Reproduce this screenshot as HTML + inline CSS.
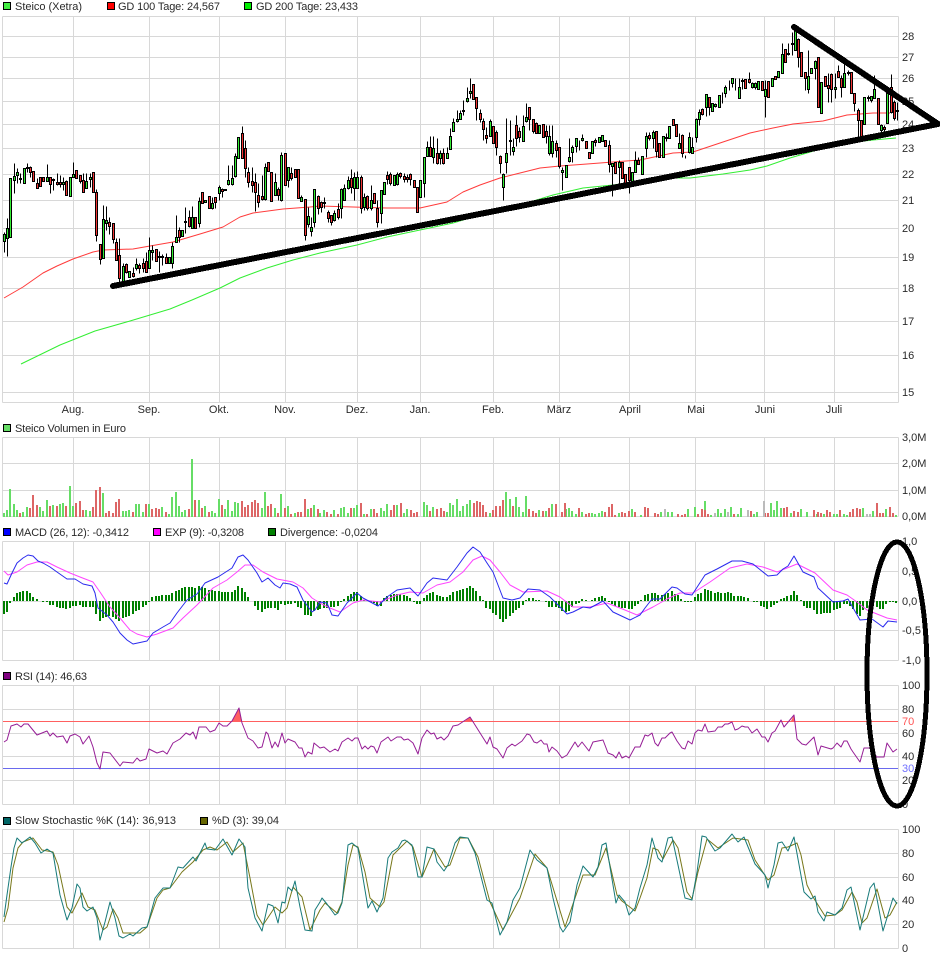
<!DOCTYPE html>
<html><head><meta charset="utf-8"><title>Steico</title>
<style>html,body{margin:0;padding:0;background:#fff}svg{display:block}text{font-family:"Liberation Sans",sans-serif;font-size:11px;fill:#2a2a2a}</style></head>
<body>
<svg width="940" height="958" viewBox="0 0 940 958" xmlns="http://www.w3.org/2000/svg">
<g transform="translate(.5 .5)" fill="none" stroke="#d8d8d8" shape-rendering="crispEdges">
<path d="M2 16H898M2 36H898M2 57H898M2 78H898M2 101H898M2 124H898M2 148H898M2 174H898M2 200H898M2 228H898M2 257H898M2 288H898M2 321H898M2 355H898M2 392H898M2 402H898M2 16V402M73 16V402M149 16V402M219 16V402M285 16V402M357 16V402M420 16V402M493 16V402M559 16V402M629 16V402M695 16V402M764 16V402M834 16V402M898 16V402"/>
<path d="M2 437H898M2 463H898M2 490H898M2 516H898M2 437V516M73 437V516M149 437V516M219 437V516M285 437V516M357 437V516M420 437V516M493 437V516M559 437V516M629 437V516M695 437V516M764 437V516M834 437V516M898 437V516"/>
<path d="M2 541H898M2 571H898M2 601H898M2 630H898M2 660H898M2 541V660M73 541V660M149 541V660M219 541V660M285 541V660M357 541V660M420 541V660M493 541V660M559 541V660M629 541V660M695 541V660M764 541V660M834 541V660M898 541V660"/>
<path d="M2 685H898M2 709H898M2 733H898M2 756H898M2 780H898M2 804H898M2 685V804M73 685V804M149 685V804M219 685V804M285 685V804M357 685V804M420 685V804M493 685V804M559 685V804M629 685V804M695 685V804M764 685V804M834 685V804M898 685V804"/>
<path d="M2 829H898M2 853H898M2 877H898M2 900H898M2 924H898M2 948H898M2 829V948M73 829V948M149 829V948M219 829V948M285 829V948M357 829V948M420 829V948M493 829V948M559 829V948M629 829V948M695 829V948M764 829V948M834 829V948M898 829V948"/>
</g>

<g fill="none" stroke-width="1" stroke-linejoin="round">
<polyline stroke="#ff3b3b" points="4,298 23,287 43,273 57,266 73,259 93,252 103,250 133,249 150,246 173,242 200,234 223,227 240,217 253,213 283,209 310,207 320,206 353,207 387,208 420,208 447,202 463,192 480,185 500,178 520,173 540,168 560,166 587,164 613,162 640,160 673,153 693,152 717,144 750,133 773,128 793,124 823,121 847,115 873,113 890,113"/>
<polyline stroke="#33ee33" points="21,364 60,345 95,331 130,321 170,309 192,300 220,288 240,278 267,268 293,260 320,253 357,245 387,237 420,230 453,223 490,212 530,202 553,195 583,188 613,185 640,181 667,178 690,178 723,174 750,170 767,166 790,158 817,150 847,143 873,140 896,138"/>
</g>

<g transform="translate(.5 .5)" shape-rendering="crispEdges">
<path fill="none" stroke="#000" d="M4 232V252M7 218V256M10 178V237M14 163V193M17 168V183M20 173V183M24 168V183M27 163V172M30 166V177M33 171V181M37 178V188M40 177V186M43 177V181M47 164V181M50 177V193M53 178V190M57 173V185M60 175V187M63 177V190M66 180V195M70 177V196M73 162V177M76 170V178M80 175V183M83 173V192M86 173V188M90 173V187M93 172V192M96 189V241M100 244V264M103 205V258M106 206V230M109 217V234M113 223V243M116 238V260M119 238V283M123 263V282M126 263V273M129 271V277M133 267V277M136 258V270M139 263V273M143 258V272M146 252V272M149 237V268M152 245V260M156 249V261M159 251V272M162 254V265M166 253V263M169 257V263M172 242V268M176 215V242M179 227V242M182 230V236M185 207V233M189 210V227M192 206V228M195 217V228M199 197V227M202 192V203M205 200V202M209 196V208M212 197V209M215 197V208M219 185V200M222 188V197M225 189V190M228 165V185M232 165V185M235 153V177M238 137V158M242 126V158M245 140V177M248 167V187M252 167V192M255 173V211M258 183V207M262 175V200M265 163V200M268 162V171M271 172V201M275 173V195M278 187V200M281 152V201M285 153V185M288 167V187M291 167V180M295 169V177M298 169V198M301 195V201M305 199V240M308 207V227M311 217V236M314 189V227M318 195V214M321 201V212M324 197V208M328 210V222M331 215V225M334 210V221M338 203V219M341 188V218M344 184V200M348 176V189M351 169V193M354 172V200M357 171V188M361 175V213M364 193V210M367 195V210M371 185V210M374 193V203M377 200V227M381 190V223M384 182V194M387 171V184M390 172V185M394 175V185M397 172V185M400 172V178M404 173V182M407 174V182M410 173V185M414 180V187M417 187V212M420 180V197M424 157V197M427 141V156M430 136V156M433 136V163M437 138V164M440 150V164M443 148V164M447 147V158M450 128V149M453 118V131M457 110V122M460 110V119M463 100V115M467 87V102M470 78V98M473 84V99M476 97V120M480 109V122M483 118V140M486 127V143M490 119V136M493 126V143M496 130V155M500 155V173M503 173V200M506 118V173M510 120V155M513 138V155M516 115V146M519 127V142M523 115V141M526 103V122M529 107V130M533 119V133M536 122V133M539 125V133M543 124V137M546 125V143M549 125V155M552 125V157M556 140V157M559 147V168M562 167V190M566 165V177M569 138V162M572 145V162M576 138V152M579 140V150M582 134V141M586 141V148M589 152V158M592 141V153M595 138V146M599 137V142M602 135V141M605 140V146M609 140V172M612 163V196M615 162V173M619 160V185M622 162V178M625 174V183M629 167V193M632 172V183M635 151V172M638 157V164M642 156V174M646 132V157M649 132V140M653 130V148M656 131V157M659 143V157M663 136V157M666 133V141M669 126V138M673 119V125M676 124V136M679 133V148M682 134V157M685 155V158M689 132V153M692 137V153M696 118V142M699 109V125M702 108V115M706 94V116M709 97V115M712 103V111M715 103V107M719 95V107M722 92V103M725 85V97M729 80V90M732 78V87M735 78V90M739 78V98M742 78V89M745 79V88M749 72V83M752 82V88M755 82V89M758 81V89M762 81V90M765 80V117M768 81V97M772 78V86M775 76V79M778 71V77M782 43V73M785 49V62M788 43V55M792 32V55M795 26V50M798 38V67M801 52V76M805 72V90M808 50V93M811 68V73M815 60V79M818 57V107M821 82V113M825 76V86M828 73V102M831 73V102M835 73V98M838 65V77M841 75V97M844 63V87M848 70V75M851 72V93M854 93V111M858 108V136M861 120V137M864 97V124M868 95V101M871 96V102M874 75V98M878 98V124M881 124V135M884 125V133M887 93V123M891 74V113M894 100V120M897 102V120"/>
<path fill="#33ee33" stroke="#000" d="M3 234h2v7h-2zM6 228h2v10h-2zM9 178h2v59h-2zM13 176h2v4h-2zM16 172h2v3h-2zM19 178h2v1h-2zM23 168h2v15h-2zM26 167h2v1h-2zM46 177h2v4h-2zM52 179h2v1h-2zM62 182h2v2h-2zM69 177h2v19h-2zM72 174h2v3h-2zM85 181h2v7h-2zM89 177h2v2h-2zM102 219h2v39h-2zM105 220h2v3h-2zM122 266h2v16h-2zM128 271h2v6h-2zM135 264h2v4h-2zM148 250h2v18h-2zM151 250h2v2h-2zM158 256h2v1h-2zM168 257h2v6h-2zM171 246h2v17h-2zM175 237h2v5h-2zM181 230h2v6h-2zM184 221h2v1h-2zM191 217h2v11h-2zM198 201h2v22h-2zM204 200h2v2h-2zM211 203h2v5h-2zM218 187h2v6h-2zM224 189h2v1h-2zM227 180h2v4h-2zM231 178h2v6h-2zM234 156h2v20h-2zM237 137h2v21h-2zM264 167h2v32h-2zM274 182h2v13h-2zM280 155h2v45h-2zM287 167h2v13h-2zM300 197h2v4h-2zM307 216h2v8h-2zM310 227h2v4h-2zM313 189h2v33h-2zM323 202h2v1h-2zM333 213h2v7h-2zM340 189h2v19h-2zM343 188h2v12h-2zM347 180h2v8h-2zM353 177h2v11h-2zM356 177h2v11h-2zM363 197h2v10h-2zM370 200h2v8h-2zM380 190h2v23h-2zM383 182h2v12h-2zM393 175h2v10h-2zM396 174h2v10h-2zM419 180h2v17h-2zM423 157h2v26h-2zM426 147h2v9h-2zM432 148h2v9h-2zM439 153h2v5h-2zM446 153h2v5h-2zM449 136h2v13h-2zM452 122h2v9h-2zM456 119h2v2h-2zM459 113h2v6h-2zM462 110h2v1h-2zM466 98h2v3h-2zM469 91h2v2h-2zM489 121h2v15h-2zM502 174h2v13h-2zM505 153h2v9h-2zM509 140h2v1h-2zM512 147h2v4h-2zM522 126h2v15h-2zM525 117h2v4h-2zM538 125h2v8h-2zM548 136h2v17h-2zM551 141h2v12h-2zM561 170h2v2h-2zM565 165h2v12h-2zM568 157h2v4h-2zM571 147h2v5h-2zM575 138h2v8h-2zM581 138h2v2h-2zM591 141h2v12h-2zM598 137h2v5h-2zM601 135h2v6h-2zM611 163h2v3h-2zM618 162h2v5h-2zM631 172h2v11h-2zM634 160h2v12h-2zM641 156h2v18h-2zM645 136h2v12h-2zM652 132h2v6h-2zM662 136h2v21h-2zM665 137h2v1h-2zM668 126h2v12h-2zM678 143h2v5h-2zM688 137h2v15h-2zM691 147h2v6h-2zM695 119h2v18h-2zM698 112h2v7h-2zM705 94h2v13h-2zM711 103h2v8h-2zM714 104h2v2h-2zM718 95h2v12h-2zM724 87h2v6h-2zM731 78h2v5h-2zM738 87h2v11h-2zM741 80h2v1h-2zM751 83h2v4h-2zM754 83h2v4h-2zM757 81h2v8h-2zM764 89h2v7h-2zM771 78h2v8h-2zM777 71h2v6h-2zM781 54h2v19h-2zM794 30h2v20h-2zM807 76h2v13h-2zM810 68h2v5h-2zM814 61h2v7h-2zM820 82h2v31h-2zM834 87h2v2h-2zM843 73h2v14h-2zM863 97h2v27h-2zM870 96h2v4h-2zM873 89h2v9h-2zM880 125h2v5h-2zM886 93h2v30h-2z"/>
<path fill="#f03434" stroke="#000" d="M29 167h2v5h-2zM32 171h2v10h-2zM36 183h2v5h-2zM39 177h2v9h-2zM42 177h2v4h-2zM49 177h2v7h-2zM56 182h2v2h-2zM59 182h2v2h-2zM65 181h2v14h-2zM75 170h2v8h-2zM79 175h2v6h-2zM82 180h2v12h-2zM92 172h2v20h-2zM95 192h2v43h-2zM99 244h2v15h-2zM108 222h2v4h-2zM112 223h2v16h-2zM115 242h2v18h-2zM118 255h2v23h-2zM125 264h2v8h-2zM132 273h2v3h-2zM138 265h2v3h-2zM142 263h2v5h-2zM145 261h2v11h-2zM155 249h2v12h-2zM161 256h2v1h-2zM165 257h2v6h-2zM178 230h2v7h-2zM188 217h2v9h-2zM194 217h2v11h-2zM201 192h2v11h-2zM208 196h2v12h-2zM214 197h2v5h-2zM221 189h2v2h-2zM241 133h2v25h-2zM244 148h2v20h-2zM247 172h2v10h-2zM251 181h2v4h-2zM254 182h2v10h-2zM257 195h2v7h-2zM261 196h2v3h-2zM267 162h2v9h-2zM270 172h2v29h-2zM277 189h2v6h-2zM284 153h2v32h-2zM290 173h2v5h-2zM294 169h2v8h-2zM297 169h2v29h-2zM304 199h2v36h-2zM317 196h2v12h-2zM320 202h2v5h-2zM327 212h2v6h-2zM330 215h2v7h-2zM337 209h2v8h-2zM350 178h2v9h-2zM360 177h2v31h-2zM366 196h2v12h-2zM373 193h2v10h-2zM376 208h2v14h-2zM386 175h2v4h-2zM389 174h2v9h-2zM399 173h2v3h-2zM403 176h2v3h-2zM406 177h2v2h-2zM409 174h2v5h-2zM413 180h2v7h-2zM416 187h2v25h-2zM429 147h2v9h-2zM436 153h2v10h-2zM442 153h2v10h-2zM472 84h2v15h-2zM475 97h2v11h-2zM479 113h2v6h-2zM482 121h2v8h-2zM485 135h2v3h-2zM492 126h2v17h-2zM495 132h2v15h-2zM499 156h2v7h-2zM515 125h2v13h-2zM518 131h2v6h-2zM528 107h2v12h-2zM532 119h2v12h-2zM535 123h2v10h-2zM542 124h2v13h-2zM545 131h2v5h-2zM555 143h2v7h-2zM558 147h2v19h-2zM585 141h2v7h-2zM588 152h2v6h-2zM594 140h2v2h-2zM604 140h2v6h-2zM608 145h2v19h-2zM614 162h2v11h-2zM621 162h2v16h-2zM624 174h2v9h-2zM628 167h2v13h-2zM637 160h2v4h-2zM648 135h2v3h-2zM655 131h2v20h-2zM658 143h2v14h-2zM672 119h2v6h-2zM675 124h2v12h-2zM681 135h2v18h-2zM701 109h2v5h-2zM708 97h2v10h-2zM744 79h2v9h-2zM748 79h2v3h-2zM761 81h2v9h-2zM767 81h2v16h-2zM774 76h2v3h-2zM784 49h2v13h-2zM787 53h2v1h-2zM791 43h2v1h-2zM797 39h2v18h-2zM800 52h2v24h-2zM804 72h2v6h-2zM817 57h2v50h-2zM824 76h2v10h-2zM827 85h2v3h-2zM830 74h2v15h-2zM837 71h2v6h-2zM840 78h2v9h-2zM847 72h2v1h-2zM850 72h2v21h-2zM853 93h2v10h-2zM857 110h2v10h-2zM860 120h2v17h-2zM867 97h2v1h-2zM877 98h2v26h-2zM883 127h2v2h-2zM890 87h2v25h-2zM893 102h2v16h-2zM896 110h2v1h-2z"/>
</g>

<g fill="none" stroke-width="2" shape-rendering="crispEdges">
<path stroke="#66dd66" d="M4 517v-4M7 517v-7M10 517v-28M14 517v-13M17 517v-7M23 517v-5M27 517v-10M40 517v-10M43 517v-6M47 517v-17M53 517v-12M60 517v-13M63 517v-14M70 517v-31M73 517v-11M86 517v-7M90 517v-6M103 517v-24M123 517v-6M126 517v-6M129 517v-7M136 517v-13M139 517v-13M143 517v-5M149 517v-13M162 517v-10M169 517v-3M172 517v-20M176 517v-25M179 517v-11M182 517v-5M185 517v-7M192 517v-58M199 517v-17M205 517v-11M212 517v-6M215 517v-4M219 517v-18M225 517v-8M228 517v-17M232 517v-6M235 517v-15M238 517v-14M262 517v-9M265 517v-25M275 517v-9M281 517v-23M288 517v-11M295 517v-4M308 517v-8M314 517v-12M320 517v-4M324 517v-7M334 517v-7M341 517v-9M344 517v-10M348 517v-4M354 517v-9M357 517v-12M364 517v-3M371 517v-8M381 517v-9M384 517v-6M387 517v-13M397 517v-12M404 517v-4M407 517v-8M424 517v-15M427 517v-12M433 517v-10M447 517v-5M450 517v-14M453 517v-12M457 517v-18M460 517v-6M463 517v-11M467 517v-13M470 517v-17M490 517v-4M506 517v-25M510 517v-18M516 517v-20M519 517v-10M523 517v-5M526 517v-21M539 517v-7M546 517v-6M552 517v-13M566 517v-8M569 517v-9M572 517v-6M576 517v-3M582 517v-5M592 517v-4M595 517v-3M599 517v-4M602 517v-6M619 517v-4M632 517v-8M641 517v-2M661 517v-5M668 517v-5M672 517v-5M688 517v-8M695 517v-10M705 517v-16M711 517v-2M718 517v-8M721 517v-4M725 517v-8M731 517v-10M738 517v-3M741 517v-9M754 517v-3M757 517v-5M771 517v-14M774 517v-7M777 517v-16M781 517v-9M791 517v-4M801 517v-8M807 517v-5M817 517v-3M824 517v-3M834 517v-3M837 517v-3M844 517v-3M847 517v-2M863 517v-9M873 517v-6M886 517v-8M896 517v-2"/>
<path stroke="#dd6666" d="M20 517v-4M30 517v-9M33 517v-22M37 517v-12M50 517v-11M57 517v-11M66 517v-11M76 517v-14M80 517v-16M83 517v-7M93 517v-10M96 517v-27M100 517v-30M106 517v-4M109 517v-6M113 517v-4M116 517v-15M119 517v-18M133 517v-5M146 517v-13M152 517v-8M156 517v-9M159 517v-8M166 517v-5M189 517v-8M195 517v-17M202 517v-9M209 517v-5M222 517v-12M242 517v-16M245 517v-10M248 517v-12M252 517v-15M255 517v-17M258 517v-14M268 517v-11M271 517v-13M278 517v-4M285 517v-9M291 517v-3M298 517v-5M301 517v-5M305 517v-18M311 517v-9M318 517v-8M327 517v-5M331 517v-3M338 517v-3M351 517v-9M361 517v-14M367 517v-3M374 517v-8M377 517v-4M391 517v-7M394 517v-12M401 517v-14M411 517v-7M414 517v-4M417 517v-5M430 517v-6M437 517v-8M441 517v-9M444 517v-6M474 517v-14M477 517v-16M480 517v-15M483 517v-12M486 517v-5M493 517v-7M496 517v-11M500 517v-11M503 517v-17M513 517v-11M529 517v-8M533 517v-6M536 517v-4M543 517v-6M549 517v-9M556 517v-13M562 517v-5M565 517v-14M579 517v-9M586 517v-3M589 517v-4M605 517v-5M609 517v-10M612 517v-13M615 517v-2M622 517v-5M625 517v-4M629 517v-6M635 517v-5M645 517v-10M648 517v-9M655 517v-4M658 517v-3M678 517v-3M682 517v-2M685 517v-3M698 517v-3M702 517v-8M705 517v-7M708 517v-3M734 517v-3M748 517v-2M751 517v-6M765 517v-4M768 517v-4M784 517v-9M787 517v-10M794 517v-6M798 517v-5M814 517v-7M818 517v-5M821 517v-4M827 517v-7M830 517v-5M840 517v-7M850 517v-5M853 517v-8M857 517v-9M860 517v-8M877 517v-14M880 517v-4M883 517v-4M890 517v-10M893 517v-4"/>
<path stroke="#bbbbbb" d="M665 517v-8M715 517v-4M728 517v-5M748 517v-7M764 517v-16M867 517v-3M870 517v-3"/>
<path stroke="#008000" d="M4 601v13M7 601v11M10 601v2M14 601v-4M17 601v-8M20 601v-9M23 601v-10M27 601v-10M30 601v-8M33 601v-4M37 601v-2M43 601v1M47 601v1M50 601v4M53 601v4M57 601v6M60 601v7M63 601v7M66 601v8M70 601v7M73 601v5M76 601v5M80 601v4M83 601v6M86 601v6M90 601v6M93 601v6M96 601v13M100 601v20M103 601v17M106 601v16M109 601v15M113 601v16M116 601v18M119 601v20M123 601v17M126 601v16M129 601v15M133 601v13M136 601v10M139 601v9M143 601v6M146 601v4M149 601v1M152 601v-4M156 601v-5M159 601v-5M162 601v-6M166 601v-6M169 601v-6M172 601v-8M176 601v-10M179 601v-11M182 601v-13M185 601v-14M189 601v-14M192 601v-14M195 601v-13M199 601v-15M202 601v-14M205 601v-13M209 601v-11M212 601v-11M215 601v-10M219 601v-10M222 601v-9M225 601v-9M228 601v-9M232 601v-9M235 601v-11M238 601v-15M242 601v-13M245 601v-9M248 601v-4M255 601v5M258 601v9M262 601v11M265 601v8M268 601v7M271 601v7M275 601v7M278 601v9M281 601v3M285 601v4M288 601v3M291 601v3M295 601v2M298 601v6M301 601v7M305 601v14M308 601v14M311 601v15M314 601v10M318 601v9M320 601v8M324 601v7M327 601v7M331 601v6M334 601v6M338 601v5M341 601v1M344 601v-2M348 601v-5M351 601v-7M354 601v-9M357 601v-9M361 601v-5M364 601v-1M371 601v1M374 601v2M377 601v5M381 601v5M384 601v-3M387 601v-5M391 601v-6M394 601v-7M397 601v-7M400 601v-7M404 601v-6M407 601v-5M410 601v-3M414 601v1M417 601v3M420 601v3M424 601v-3M427 601v-6M430 601v-8M433 601v-9M437 601v-6M440 601v-5M443 601v-4M447 601v-4M450 601v-6M453 601v-9M457 601v-10M460 601v-11M463 601v-12M467 601v-13M470 601v-15M473 601v-13M476 601v-10M480 601v-5M483 601v-1M486 601v7M490 601v8M493 601v12M496 601v14M500 601v18M503 601v21M506 601v18M510 601v15M513 601v12M516 601v9M519 601v7M523 601v4M526 601v-1M529 601v-3M533 601v-3M536 601v-1M539 601v-1M546 601v1M549 601v6M552 601v6M556 601v6M559 601v7M562 601v10M566 601v11M569 601v10M572 601v6M576 601v3M579 601v2M582 601v-2M586 601v-1M592 601v-1M595 601v-3M599 601v-4M602 601v-5M605 601v-3M609 601v1M612 601v3M615 601v5M619 601v6M622 601v7M625 601v7M629 601v8M632 601v8M635 601v5M638 601v3M641 601v-1M645 601v-6M648 601v-7M652 601v-8M655 601v-8M658 601v-6M662 601v-6M665 601v-7M668 601v-8M672 601v-10M675 601v-7M678 601v-6M681 601v-2M685 601v1M688 601v1M691 601v1M695 601v-4M698 601v-7M701 601v-8M705 601v-12M708 601v-11M711 601v-10M715 601v-8M718 601v-9M721 601v-8M725 601v-8M728 601v-9M731 601v-8M734 601v-5M738 601v-5M741 601v-5M744 601v-4M748 601v-3M754 601v1M757 601v1M761 601v5M764 601v6M767 601v8M771 601v6M774 601v4M777 601v2M781 601v-2M784 601v-3M787 601v-5M791 601v-6M794 601v-10M797 601v-6M801 601v-1M804 601v5M807 601v7M810 601v7M814 601v9M817 601v13M821 601v13M824 601v12M827 601v12M830 601v12M834 601v9M837 601v8M840 601v7M844 601v3M847 601v3M850 601v5M853 601v8M857 601v13M860 601v15M863 601v9M867 601v7M870 601v7M873 601v3M877 601v6M880 601v8M883 601v8M886 601v3M890 601v1M893 601v1M896 601v2"/>
</g>

<g fill="none" stroke-width="1" stroke-linejoin="round">
<polyline stroke="#ff44ff" points="4,571 8,575 17,572 27,565 37,562 47,562 57,567 70,573 80,577 93,582 100,592 110,607 120,618 130,630 137,634 147,637 157,634 173,628 183,618 197,605 213,588 227,580 237,572 245,565 253,565 263,572 277,579 293,582 303,588 312,598 320,603 330,608 340,612 353,603 363,600 380,602 397,595 410,592 423,593 437,585 450,582 463,572 473,560 482,556 490,560 500,572 510,585 523,592 547,591 560,597 573,607 590,607 607,603 620,608 637,615 653,607 667,599 680,593 693,593 710,582 730,568 747,564 763,567 777,572 797,564 815,573 833,590 847,595 857,602 867,610 887,618 897,620"/>
<polyline stroke="#2a2aee" points="4,583 7,584 12,573 17,563 23,558 28,555 33,556 38,561 43,563 50,567 57,572 67,579 75,579 83,584 92,586 95,593 98,608 107,615 113,622 120,633 127,640 133,644 147,641 153,633 163,627 170,623 177,613 187,600 197,594 205,583 218,577 232,568 238,557 243,555 248,560 257,573 262,582 268,578 275,585 280,588 283,583 290,584 297,587 303,600 312,612 315,610 320,602 327,603 332,615 338,616 347,603 357,593 363,598 378,606 387,597 397,590 410,588 418,596 427,583 433,578 447,580 457,567 467,553 473,547 480,552 487,563 493,572 503,598 512,600 520,598 528,589 540,590 550,597 560,607 567,614 573,612 583,607 590,608 603,601 613,612 630,620 640,615 645,608 652,599 660,599 672,587 677,588 685,594 692,595 705,575 717,569 732,561 742,561 753,564 768,576 777,575 783,569 788,566 794,556 803,572 814,577 818,588 833,602 843,601 848,599 860,620 872,619 883,627 888,621 897,622"/>
<path stroke="#ff6060" d="M3 721.5H898"/>
<path stroke="#6a6aee" d="M3 768.5H898"/>
<path fill="#ff6060" stroke="none" d="M232 721L239 708L242 721ZM465 721L470 717L473 721ZM791 721L794 715L795 721Z"/>
<polyline stroke="#961e96" points="4,742 7,740 11,726 17,724 21,727 24,724 28,724 37,735 47,731 50,736 53,733 57,737 63,736 67,743 70,736 75,734 80,737 83,744 89,736 93,747 97,763 100,769 103,752 110,753 120,766 123,762 133,763 137,758 140,761 146,759 149,749 157,753 163,751 167,754 173,743 180,739 186,733 190,735 193,732 196,739 199,727 206,727 210,732 215,730 219,723 223,726 227,726 232,721 239,708 242,723 248,738 253,741 258,748 262,747 266,732 268,734 272,748 275,742 278,747 282,733 285,743 288,739 295,742 299,748 302,748 305,757 308,752 312,754 314,743 320,748 324,747 330,752 335,749 338,751 342,742 348,738 352,741 355,738 358,738 362,749 365,746 368,749 371,746 374,747 377,753 381,742 388,737 391,741 397,737 401,737 404,740 408,739 413,743 418,754 422,738 427,730 431,734 434,733 437,739 441,737 444,740 448,736 453,726 458,725 470,717 487,744 490,737 493,747 497,749 503,758 507,748 512,744 515,746 522,741 527,734 530,735 534,742 537,743 541,740 544,744 547,744 549,752 552,747 557,751 562,758 567,755 575,742 578,747 582,742 589,751 593,742 603,740 608,753 613,755 616,758 619,752 622,758 626,756 629,758 635,747 640,747 645,735 648,736 652,733 655,743 658,746 662,738 665,738 670,733 672,732 677,741 682,748 685,749 688,741 692,744 695,733 698,730 702,731 705,724 708,732 715,731 718,727 722,727 725,724 728,724 732,722 735,730 738,729 742,726 745,727 748,727 752,733 757,729 762,737 765,737 768,742 772,733 775,731 781,720 784,727 794,715 797,739 802,744 806,745 814,737 818,755 821,746 831,749 833,748 837,743 841,747 844,741 847,741 851,749 853,752 860,762 864,748 870,748 877,757 884,757 887,743 893,752 897,749"/>
<polyline stroke="#77771a" points="4,922 8,908 13,868 18,848 23,842 33,838 42,850 53,852 58,865 67,907 72,913 82,893 88,907 95,910 103,930 107,927 113,909 118,918 123,933 140,933 147,927 157,898 163,890 170,888 182,872 193,862 203,850 210,847 217,850 227,842 233,852 243,843 250,878 257,915 263,925 275,907 282,913 287,908 293,887 302,897 310,930 320,910 325,903 337,913 342,902 348,865 353,845 358,847 365,872 370,898 380,907 384,902 393,855 407,841 413,847 422,877 434,849 445,867 450,865 460,838 468,838 478,857 490,902 503,930 520,898 535,854 547,868 565,927 583,875 595,875 606,848 617,895 622,901 635,911 640,898 647,878 653,848 658,850 663,859 673,840 678,848 687,892 692,899 698,872 707,839 718,848 733,838 748,840 755,860 768,880 774,875 782,848 788,847 797,843 801,855 807,885 813,897 825,916 835,915 842,910 852,892 857,902 862,923 867,918 877,889 885,918 890,915 897,902"/>
<polyline stroke="#177a7a" points="4,917 7,895 11,867 14,848 17,838 22,843 30,837 35,843 41,853 47,849 53,853 60,895 67,920 72,908 77,884 80,888 83,907 87,911 93,907 97,918 100,940 105,922 110,902 115,918 119,936 123,938 130,934 133,936 142,928 147,927 155,898 163,888 170,888 178,867 183,868 193,857 196,861 200,853 205,843 207,849 215,850 223,839 232,855 239,839 245,847 248,888 255,918 262,931 268,904 273,906 278,923 282,902 285,903 288,887 292,891 295,881 300,907 305,930 312,931 315,910 320,902 322,898 327,904 335,915 338,913 342,903 348,845 352,843 358,848 368,908 372,901 377,912 383,898 388,858 392,852 398,848 402,841 405,840 412,845 418,877 422,877 427,847 434,849 437,862 444,871 448,865 455,843 460,837 468,838 475,853 487,900 492,903 500,935 507,922 513,900 520,888 530,850 537,860 547,868 553,898 560,927 563,932 570,922 577,885 583,866 593,877 598,867 602,845 606,843 616,903 619,895 625,902 629,915 635,908 640,888 647,865 652,838 658,858 662,862 668,838 672,837 678,865 685,898 692,900 697,872 702,836 706,837 715,851 720,848 732,834 738,842 744,837 755,864 765,875 768,888 774,865 778,843 782,842 788,851 794,837 804,892 811,899 815,896 818,912 824,921 827,912 835,915 842,908 847,890 851,887 860,930 870,888 874,883 883,931 893,898 897,904"/>
</g>

<g stroke="#000" shape-rendering="crispEdges">
<rect x="3.5" y="2.5" width="7" height="7" fill="#44ee44"/>
<rect x="107.5" y="2.5" width="7" height="7" fill="#ff0000"/>
<rect x="244.5" y="2.5" width="7" height="7" fill="#00ee00"/>
<rect x="3.5" y="424.5" width="7" height="7" fill="#66dd66"/>
<rect x="3.5" y="528.5" width="7" height="7" fill="#0000ff"/>
<rect x="153.5" y="528.5" width="7" height="7" fill="#ff00ff"/>
<rect x="268.5" y="528.5" width="7" height="7" fill="#008000"/>
<rect x="3.5" y="672.5" width="7" height="7" fill="#800080"/>
<rect x="3.5" y="817.5" width="7" height="7" fill="#006666"/>
<rect x="200.5" y="817.5" width="7" height="7" fill="#666600"/>
</g>
<text x="15" y="10" textLength="67" lengthAdjust="spacing">Steico (Xetra)</text>
<text x="118" y="10" textLength="102" lengthAdjust="spacing">GD 100 Tage: 24,567</text>
<text x="256" y="10" textLength="102" lengthAdjust="spacing">GD 200 Tage: 23,433</text>
<text x="15" y="432" textLength="111" lengthAdjust="spacing">Steico Volumen in Euro</text>
<text x="15" y="536" textLength="114" lengthAdjust="spacing">MACD (26, 12): -0,3412</text>
<text x="165" y="536" textLength="79" lengthAdjust="spacing">EXP (9): -0,3208</text>
<text x="280" y="536" textLength="98" lengthAdjust="spacing">Divergence: -0,0204</text>
<text x="15" y="680" textLength="72" lengthAdjust="spacing">RSI (14): 46,63</text>
<text x="15" y="824" textLength="161" lengthAdjust="spacing">Slow Stochastic %K (14): 36,913</text>
<text x="212" y="824" textLength="67" lengthAdjust="spacing">%D (3): 39,04</text>

<g text-anchor="middle">
<text x="73" y="413">Aug.</text><text x="149" y="413">Sep.</text><text x="219" y="413">Okt.</text><text x="285" y="413">Nov.</text><text x="357" y="413">Dez.</text><text x="420" y="413">Jan.</text><text x="493" y="413">Feb.</text><text x="559" y="413">März</text><text x="630" y="413">April</text><text x="696" y="413">Mai</text><text x="765" y="413">Juni</text><text x="834" y="413">Juli</text>
</g>
<g>
<text x="902" y="40">28</text><text x="902" y="61">27</text><text x="902" y="82">26</text><text x="902" y="105">25</text><text x="902" y="128">24</text><text x="902" y="152">23</text><text x="902" y="178">22</text><text x="902" y="204">21</text><text x="902" y="232">20</text><text x="902" y="261">19</text><text x="902" y="292">18</text><text x="902" y="325">17</text><text x="902" y="359">16</text><text x="902" y="396">15</text>
<text x="902" y="441">3,0M</text><text x="902" y="467">2,0M</text><text x="902" y="494">1,0M</text><text x="902" y="520">0,0M</text>
<text x="902" y="545">1,0</text><text x="902" y="575">0,5</text><text x="902" y="605">0,0</text><text x="902" y="634">-0,5</text><text x="902" y="664">-1,0</text>
<text x="902" y="689">100</text><text x="902" y="713">80</text><text x="902" y="725" style="fill:#ff5555">70</text><text x="902" y="737">60</text><text x="902" y="760">40</text><text x="902" y="772" style="fill:#7070ff">30</text><text x="902" y="784">20</text><text x="902" y="808">0</text>
<text x="902" y="833">100</text><text x="902" y="857">80</text><text x="902" y="881">60</text><text x="902" y="904">40</text><text x="902" y="928">20</text><text x="902" y="952">0</text>
</g>

<g fill="none" stroke="#000" stroke-linecap="round" shape-rendering="crispEdges">
<path stroke-width="6" d="M113 286L938 124"/>
<path stroke-width="6" d="M794 27L938 124"/>
<ellipse stroke-width="5" cx="897" cy="674" rx="30" ry="132"/>
</g>
</svg>
</body></html>
